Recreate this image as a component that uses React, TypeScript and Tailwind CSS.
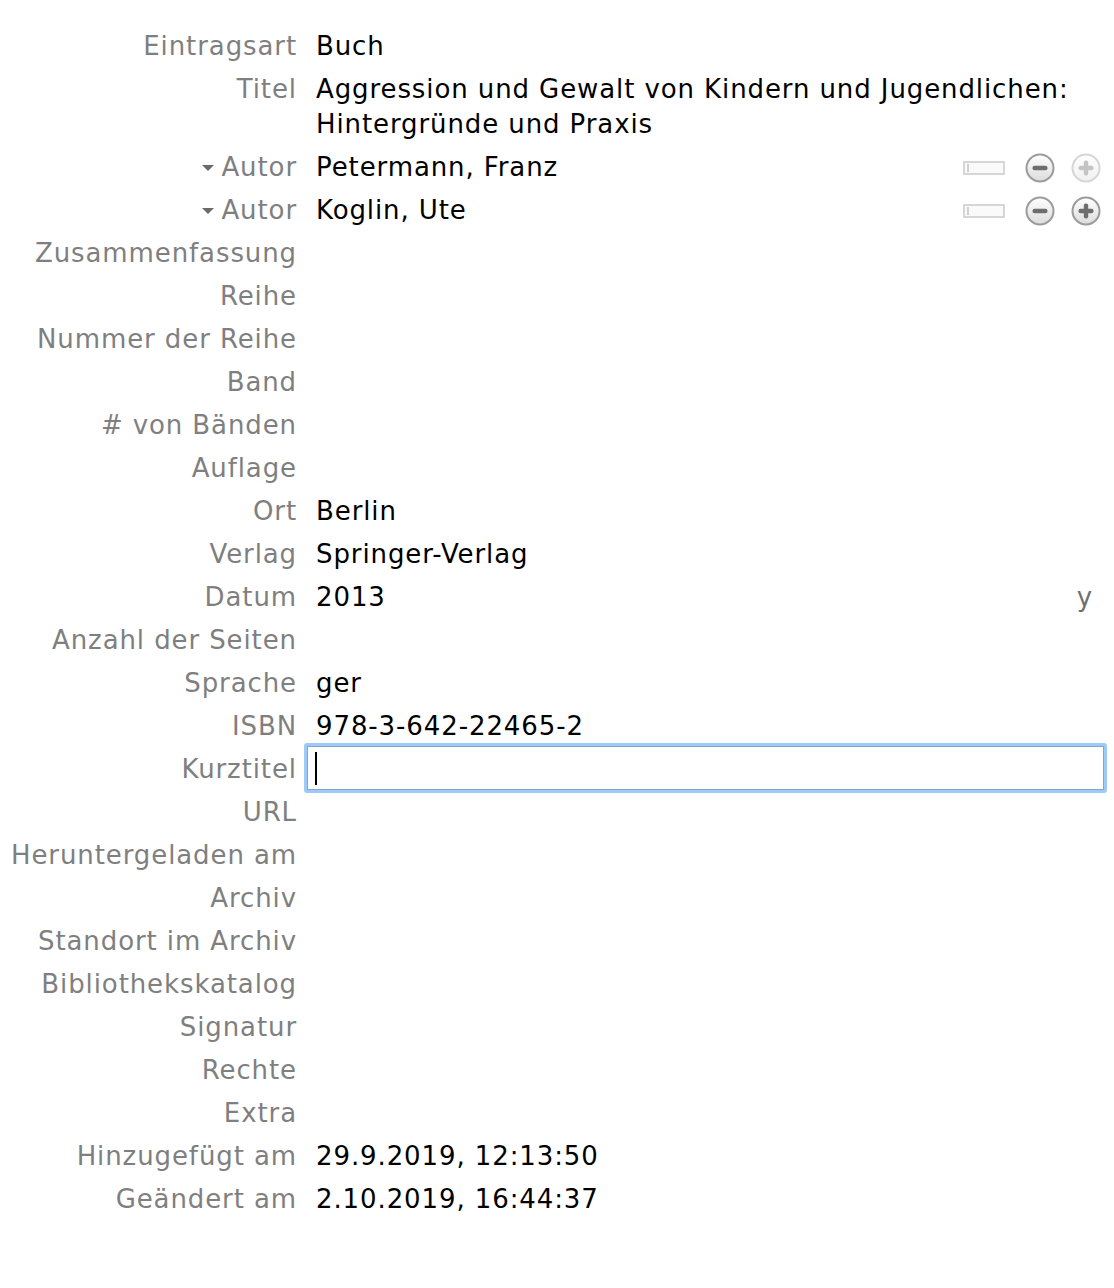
import React from "react";

interface Field {
  label: string;
  value?: string;
  lines?: string[];
  creator?: boolean;
  plusDisabled?: boolean;
  dateHint?: string;
  editing?: boolean;
}

const fields: Field[] = [
  { label: "Eintragsart", value: "Buch" },
  { label: "Titel", lines: ["Aggression und Gewalt von Kindern und Jugendlichen:", "Hintergründe und Praxis"] },
  { label: "Autor", value: "Petermann, Franz", creator: true, plusDisabled: true },
  { label: "Autor", value: "Koglin, Ute", creator: true },
  { label: "Zusammenfassung" },
  { label: "Reihe" },
  { label: "Nummer der Reihe" },
  { label: "Band" },
  { label: "# von Bänden" },
  { label: "Auflage" },
  { label: "Ort", value: "Berlin" },
  { label: "Verlag", value: "Springer-Verlag" },
  { label: "Datum", value: "2013", dateHint: "y" },
  { label: "Anzahl der Seiten" },
  { label: "Sprache", value: "ger" },
  { label: "ISBN", value: "978-3-642-22465-2" },
  { label: "Kurztitel", editing: true },
  { label: "URL" },
  { label: "Heruntergeladen am" },
  { label: "Archiv" },
  { label: "Standort im Archiv" },
  { label: "Bibliothekskatalog" },
  { label: "Signatur" },
  { label: "Rechte" },
  { label: "Extra" },
  { label: "Hinzugefügt am", value: "29.9.2019, 12:13:50" },
  { label: "Geändert am", value: "2.10.2019, 16:44:37" },
];

const RoundButton = ({ kind, disabled = false }: { kind: "minus" | "plus"; disabled?: boolean }) => {
  const id = `g-${kind}-${disabled ? "d" : "e"}`;
  return (
    <svg width="30" height="30" viewBox="0 0 30 30" className={disabled ? "opacity-40" : ""}>
      <defs>
        <linearGradient id={id} x1="0" y1="0" x2="0" y2="1">
          <stop offset="0%" stopColor="#ffffff" />
          <stop offset="100%" stopColor="#dcdcdc" />
        </linearGradient>
      </defs>
      <circle cx="15" cy="15" r="13.5" fill={`url(#${id})`} stroke="#9b9b9b" strokeWidth="2" />
      <rect x="7.5" y="12.8" width="15" height="4.4" rx="2" fill="#6e6e6e" />
      {kind === "plus" && <rect x="12.8" y="7.5" width="4.4" height="15" rx="2" fill="#6e6e6e" />}
    </svg>
  );
};

const CreatorToggle = () => (
  <div className="w-[42px] h-[14px] border-2 border-[#d6d6d6] bg-[#fafafa] flex items-center pl-[2px]">
    <div className="w-[2px] h-[8px] bg-[#cfcfcf]" />
  </div>
);

export default function App() {
  return (
    <div
      className="w-[1114px] h-[1288px] bg-white pt-[25px] pr-[13px]"
      style={{ fontFamily: '"DejaVu Sans", "Noto Sans", sans-serif' }}
    >
      <div className="grid grid-cols-[296px_1fr] gap-x-5 text-[26px] leading-[35px] tracking-[0.9px]">
        {fields.map((f, i) => (
          <React.Fragment key={i}>
            <div className="py-1 text-right text-[#7f7f7f] whitespace-nowrap flex justify-end items-start -mr-[1px]">
              {f.creator && (
                <svg width="14" height="35" viewBox="0 0 14 35" className="mr-[6px]">
                  <path d="M1 15 L13 15 L7 21 Z" fill="#6b6b6b" />
                </svg>
              )}
              <span>{f.label}</span>
            </div>
            <div className="py-1 text-black min-w-0">
              {f.lines && f.lines.map((l, j) => <div key={j} className="whitespace-nowrap">{l}</div>)}
              {f.creator && (
                <div className="flex items-center">
                  <span className="flex-1">{f.value}</span>
                  <div className="flex items-center">
                    <CreatorToggle />
                    <div className="ml-[20px]">
                      <RoundButton kind="minus" />
                    </div>
                    <div className="ml-[16px]">
                      <RoundButton kind="plus" disabled={f.plusDisabled} />
                    </div>
                  </div>
                </div>
              )}
              {f.dateHint && (
                <div className="flex items-center justify-between">
                  <span>{f.value}</span>
                  <span className="text-[#6f6f6f] pr-[8px]">{f.dateHint}</span>
                </div>
              )}
              {f.editing && (
                <div className="-ml-[12px] -mr-[6px] -mt-[9px] -mb-[7px] h-[50px] rounded-[3px] border-[3px] border-[#9fc9f7]">
                  <div className="h-full border border-[#7ea6d3] bg-white flex items-center pl-[7px]">
                    <div className="w-[2px] h-[33px] bg-black" />
                  </div>
                </div>
              )}
              {!f.lines && !f.creator && !f.dateHint && !f.editing && (
                <div className="h-[35px] whitespace-nowrap">{f.value}</div>
              )}
            </div>
          </React.Fragment>
        ))}
      </div>
    </div>
  );
}
